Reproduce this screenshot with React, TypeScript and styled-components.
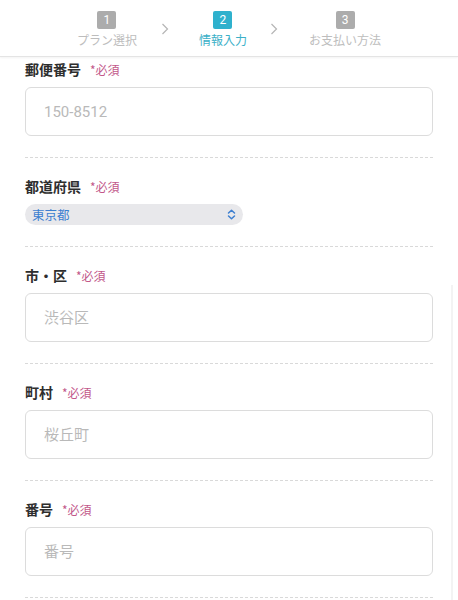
import React from "react";
import styled, { createGlobalStyle } from "styled-components";

const Global = createGlobalStyle`
  html, body { margin: 0; padding: 0; background: #fff; }
  body { font-family: "Noto Sans CJK JP", "Noto Sans", sans-serif; color: #333; }
  * { box-sizing: border-box; }
`;

const Page = styled.div`
  width: 458px;
  height: 600px;
  overflow: hidden;
  background: #fff;
`;

const Header = styled.header`
  height: 57px;
  display: flex;
  justify-content: center;
  align-items: flex-start;
  padding-top: 11px;
  border-bottom: 1px solid #e4e4e4;
  box-shadow: 0 1px 2px rgba(0, 0, 0, 0.05);
`;

const Step = styled.div`
  display: flex;
  flex-direction: column;
  align-items: center;
`;

const Badge = styled.div<{ $active?: boolean }>`
  width: 19px;
  height: 18px;
  border-radius: 2px;
  background: ${(p) => (p.$active ? "#2fb1cd" : "#acacac")};
  color: #fff;
  font-family: "Roboto", "Noto Sans", sans-serif;
  font-size: 12px;
  line-height: 18px;
  text-align: center;
`;

const StepLabel = styled.div<{ $active?: boolean }>`
  margin-top: 3px;
  font-size: 12px;
  line-height: 16px;
  color: ${(p) => (p.$active ? "#3bb0c8" : "#bdbdbd")};
  white-space: nowrap;
`;

const Chevron = styled.div<{ $left: number; $right: number }>`
  margin: 12px ${(p) => p.$right}px 0 ${(p) => p.$left}px;
  width: 8px;
  height: 12px;
  display: flex;
`;

const Form = styled.main`
  padding: 2px 25px 0;
`;

const Section = styled.section<{ $first?: boolean }>`
  padding: ${(p) => (p.$first ? "0" : "18px")} 0 21px;
  border-bottom: 1px dashed #d9d9d9;
`;

const SelectSection = styled(Section)`
  padding-bottom: 21px;
`;

const LabelRow = styled.div`
  height: 20px;
  display: flex;
  align-items: center;
  gap: 9px;
  margin-bottom: 8px;
`;

const Label = styled.span`
  font-size: 14px;
  font-weight: 700;
  color: #2e2e2e;
`;

const Required = styled.span`
  font-size: 12px;
  color: #c2578a;
`;

const Input = styled.input`
  display: block;
  width: 100%;
  height: 49px;
  border: 1px solid #dcdcdc;
  border-radius: 6px;
  padding: 0 18px;
  font-family: "Roboto", "Noto Sans CJK JP", sans-serif;
  font-size: 15px;
  color: #333;
  background: #fff;
  outline: none;
  &::placeholder { color: #b9b9b9; }
`;

const Select = styled.div`
  width: 218px;
  height: 21px;
  border-radius: 11px;
  background: #e8e8eb;
  display: flex;
  align-items: center;
  justify-content: space-between;
  padding: 0 7px 0 7px;
  margin-top: 1px;
  font-size: 12.5px;
  color: #3d7fd0;
`;

const ScrollTrack = styled.div`
  position: fixed;
  right: 5px;
  top: 285px;
  width: 2px;
  height: 315px;
  background: #f3f3f3;
`;

const ChevronIcon = () => (
  <svg width="8" height="12" viewBox="0 0 8 12">
    <polyline points="1.5,1 6.5,6 1.5,11" fill="none" stroke="#b5b5b5" strokeWidth="1.2" />
  </svg>
);

const UpDownIcon = () => (
  <svg width="9" height="11" viewBox="0 0 9 11">
    <polyline points="1.5,4 4.5,1.2 7.5,4" fill="none" stroke="#3d7fd0" strokeWidth="1.5" strokeLinecap="round" strokeLinejoin="round" />
    <polyline points="1.5,7 4.5,9.8 7.5,7" fill="none" stroke="#3d7fd0" strokeWidth="1.5" strokeLinecap="round" strokeLinejoin="round" />
  </svg>
);

const fields = [
  { label: "市・区", placeholder: "渋谷区" },
  { label: "町村", placeholder: "桜丘町" },
  { label: "番号", placeholder: "番号" },
];

export default function App() {
  return (
    <Page>
      <Global />
      <Header>
        <Step>
          <Badge>1</Badge>
          <StepLabel>プラン選択</StepLabel>
        </Step>
        <Chevron $left={24} $right={30}>
          <ChevronIcon />
        </Chevron>
        <Step>
          <Badge $active>2</Badge>
          <StepLabel $active>情報入力</StepLabel>
        </Step>
        <Chevron $left={23} $right={31}>
          <ChevronIcon />
        </Chevron>
        <Step>
          <Badge>3</Badge>
          <StepLabel>お支払い方法</StepLabel>
        </Step>
      </Header>
      <Form>
        <Section $first>
          <LabelRow>
            <Label>郵便番号</Label>
            <Required>*必須</Required>
          </LabelRow>
          <Input placeholder="150-8512" />
        </Section>
        <SelectSection>
          <LabelRow>
            <Label>都道府県</Label>
            <Required>*必須</Required>
          </LabelRow>
          <Select>
            <span>東京都</span>
            <UpDownIcon />
          </Select>
        </SelectSection>
        {fields.map((f) => (
          <Section key={f.label}>
            <LabelRow>
              <Label>{f.label}</Label>
              <Required>*必須</Required>
            </LabelRow>
            <Input placeholder={f.placeholder} />
          </Section>
        ))}
      </Form>
      <ScrollTrack />
    </Page>
  );
}
